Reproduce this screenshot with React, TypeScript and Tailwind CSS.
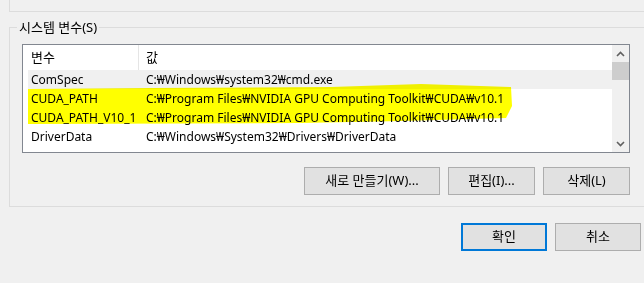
const rows = [
  { name: "ComSpec", value: "C:₩Windows₩system32₩cmd.exe", selected: true },
  { name: "CUDA_PATH", value: "C:₩Program Files₩NVIDIA GPU Computing Toolkit₩CUDA₩v10.1" },
  { name: "CUDA_PATH_V10_1", value: "C:₩Program Files₩NVIDIA GPU Computing Toolkit₩CUDA₩v10.1" },
  { name: "DriverData", value: "C:₩Windows₩System32₩Drivers₩DriverData" },
];

function Chevron({ up }: { up?: boolean }) {
  return (
    <svg width="9" height="6" viewBox="0 0 9 6" className="text-[#606060]">
      <path d={up ? "M1 5 L4.5 1.5 L8 5" : "M1 1 L4.5 4.5 L8 1"} fill="none" stroke="currentColor" strokeWidth="1.6" />
    </svg>
  );
}

function Button({ children, w, primary }: { children: React.ReactNode; w: string; primary?: boolean }) {
  return (
    <button
      className={
        "flex h-[28px] items-center justify-center bg-[#e1e1e1] text-[13px] text-black " +
        w +
        (primary ? " border-2 border-[#0078d7]" : " border border-[#adadad]")
      }
    >
      {children}
    </button>
  );
}

export default function App() {
  return (
    <div
      className="h-[283px] w-[644px] overflow-hidden bg-[#f0f0f0] text-[12px] text-black"
      style={{ fontFamily: '"Noto Sans", "Noto Sans CJK KR", sans-serif' }}
    >
      <div className="ml-[9px] h-[12px] border-b border-l border-[#dcdcdc]" />

      <div className="relative ml-[9px] mt-[15px] w-[660px] border-b border-l border-t border-[#dcdcdc] pb-[11px] pl-[12px] pt-[16px]">
        <span className="absolute -top-[10px] left-[7px] bg-[#f0f0f0] px-[2px] text-[13px] leading-[18px]">
          시스템 변수(S)
        </span>

        <div className="relative flex h-[109px] w-[608px] border border-[#828790] bg-white">
          <div className="flex-1">
            <div className="flex h-[25px] items-center text-[13px]">
              <div className="flex h-full w-[116px] items-center border-r border-[#e5e5e5] pl-[8px]">변수</div>
              <div className="pl-[7px]">값</div>
            </div>
            {rows.map((r) => (
              <div
                key={r.name}
                className={"ml-[5px] flex h-[19px] items-center leading-none " + (r.selected ? "bg-[#f0f0f0]" : "")}
              >
                <div className="w-[111px] whitespace-nowrap pl-[3px]">{r.name}</div>
                <div className="whitespace-nowrap pl-[7px]">{r.value}</div>
              </div>
            ))}
          </div>
          <div className="flex w-[17px] flex-col bg-[#f0f0f0]">
            <div className="flex h-[17px] items-center justify-center">
              <Chevron up />
            </div>
            <div className="h-[18px] bg-[#cdcdcd]" />
            <div className="flex-1" />
            <div className="flex h-[17px] items-center justify-center">
              <Chevron />
            </div>
          </div>

          <svg
            className="pointer-events-none absolute left-0 top-0 mix-blend-multiply"
            width="608"
            height="109"
          >
            <polygon
              points="5,44 128,43 308,42 398,39 488,42 489,61 483,73 378,76 278,78 5,79"
              fill="#ffff00"
            />
          </svg>
        </div>

        <div className="mt-[14px] flex w-[608px] justify-end gap-[8px]">
          <Button w="w-[136px]">새로 만들기(W)...</Button>
          <Button w="w-[87px]">편집(I)...</Button>
          <Button w="w-[87px]">삭제(L)</Button>
        </div>
      </div>

      <div className="mr-[3px] mt-[16px] flex justify-end gap-[8px]">
        <Button w="w-[86px]" primary>
          확인
        </Button>
        <Button w="w-[86px]">취소</Button>
      </div>
    </div>
  );
}
